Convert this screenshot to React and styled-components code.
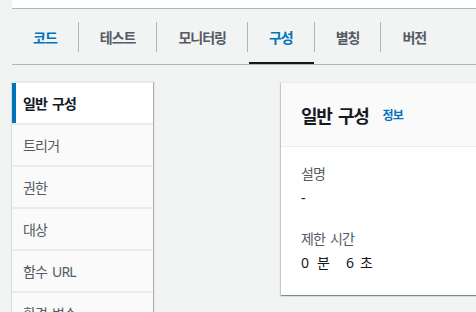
import React from 'react';
import styled, { createGlobalStyle } from 'styled-components';

const GlobalStyle = createGlobalStyle`
  html, body {
    margin: 0;
    padding: 0;
    background: #f2f3f3;
    overflow: hidden;
  }
  body {
    font-family: "Noto Sans", "Noto Sans CJK KR", sans-serif;
    color: #16191f;
  }
`;

const Page = styled.div`
  width: 476px;
  height: 312px;
  padding-left: 12px;
  box-sizing: border-box;
  overflow: hidden;
`;

const TopPanel = styled.div`
  height: 8px;
  width: 600px;
  background: #ffffff;
  border-bottom: 1px solid #aab7b8;
`;

const TabBar = styled.div`
  display: flex;
  align-items: center;
  height: 55px;
  width: 600px;
  border-bottom: 1px solid #aab7b8;
`;

const Tab = styled.div`
  position: relative;
  height: 100%;
  display: flex;
  align-items: center;
  padding: 0 21px;
  font-size: 14px;
  font-weight: 700;
  letter-spacing: -1px;
  color: ${props => (props.blue ? '#0073bb' : '#545b64')};

  &::after {
    content: '';
    display: ${props => (props.active ? 'block' : 'none')};
    position: absolute;
    left: 1px;
    right: 0;
    bottom: 0;
    height: 2px;
    background: #16191f;
  }
`;

const Divider = styled.div`
  width: 1px;
  height: 30px;
  background: #aab7b8;
`;

const Content = styled.div`
  display: flex;
  align-items: flex-start;
  margin-top: 17px;
  gap: 128px;
`;

const Side = styled.div`
  flex: 0 0 141px;
  display: flex;
  flex-direction: column;
  gap: 2px;
  background: #eaeded;
  border-top: 1px solid #eaeded;
  box-shadow: 1px 0 1px 0 rgba(0, 28, 36, 0.3), -1px 0 0 0 #d5dbdb;
`;

const SideItem = styled.div`
  height: 40px;
  display: flex;
  align-items: center;
  padding-left: 11px;
  font-size: 14px;
  letter-spacing: -0.8px;
  word-spacing: 2px;
  white-space: pre;
  font-weight: ${props => (props.active ? 700 : 400)};
  color: ${props => (props.active ? '#16191f' : '#545b64')};
  background: ${props => (props.active ? '#ffffff' : '#fafafa')};
  box-shadow: ${props => (props.active ? 'inset 4px 0 0 0 #0073bb' : 'none')};
`;

const Card = styled.div`
  flex: 0 0 320px;
  background: #ffffff;
  border-top: 1px solid #eaeded;
  box-shadow: 0 1px 1px 0 rgba(0, 28, 36, 0.3), 1px 1px 1px 0 rgba(0, 28, 36, 0.15),
    -1px 1px 1px 0 rgba(0, 28, 36, 0.15);
`;

const CardHeader = styled.div`
  height: 63px;
  display: flex;
  align-items: center;
  padding: 0 20px;
  background: #fafafa;
  border-bottom: 1px solid #eaeded;
`;

const Title = styled.h2`
  margin: 0;
  font-size: 18px;
  font-weight: 700;
  letter-spacing: -1.3px;
  word-spacing: 3px;
  white-space: pre;
  color: #16191f;
`;

const InfoLink = styled.a`
  margin-left: 14px;
  font-size: 12px;
  font-weight: 700;
  letter-spacing: -0.8px;
  color: #0073bb;
  text-decoration: none;
`;

const CardBody = styled.div`
  padding: 16px 20px 21px;
`;

const Field = styled.div`
  & + & {
    margin-top: 19px;
  }
`;

const Label = styled.div`
  font-size: 14px;
  line-height: 22px;
  letter-spacing: -0.8px;
  word-spacing: 2px;
  white-space: pre;
  color: #545b64;
`;

const Value = styled.div`
  margin-top: 2px;
  font-size: 14px;
  line-height: 22px;
  color: #16191f;
  white-space: pre;
`;

const Part = styled.span`
  margin-right: ${props => props.gap || 0}px;
`;

const tabs = [
  { label: '코드', blue: true },
  { label: '테스트' },
  { label: '모니터링' },
  { label: '구성', blue: true, active: true },
  { label: '별칭' },
  { label: '버전' },
];

const sideItems = ['일반 구성', '트리거', '권한', '대상', '함수 URL', '환경 변수'];

export default function App() {
  return (
    <Page>
      <GlobalStyle />
      <TopPanel />
      <TabBar>
        {tabs.map((t, i) => (
          <React.Fragment key={t.label}>
            {i > 0 && <Divider />}
            <Tab blue={t.blue} active={t.active}>
              {t.label}
            </Tab>
          </React.Fragment>
        ))}
      </TabBar>
      <Content>
        <Side>
          {sideItems.map((s, i) => (
            <SideItem key={s} active={i === 0}>
              {s}
            </SideItem>
          ))}
        </Side>
        <Card>
          <CardHeader>
            <Title>일반 구성</Title>
            <InfoLink href="#">정보</InfoLink>
          </CardHeader>
          <CardBody>
            <Field>
              <Label>설명</Label>
              <Value>-</Value>
            </Field>
            <Field>
              <Label>제한 시간</Label>
              <Value>
                <Part gap={8}>0</Part>
                <Part gap={16}>분</Part>
                <Part gap={6}>6</Part>
                <Part>초</Part>
              </Value>
            </Field>
          </CardBody>
        </Card>
      </Content>
    </Page>
  );
}
